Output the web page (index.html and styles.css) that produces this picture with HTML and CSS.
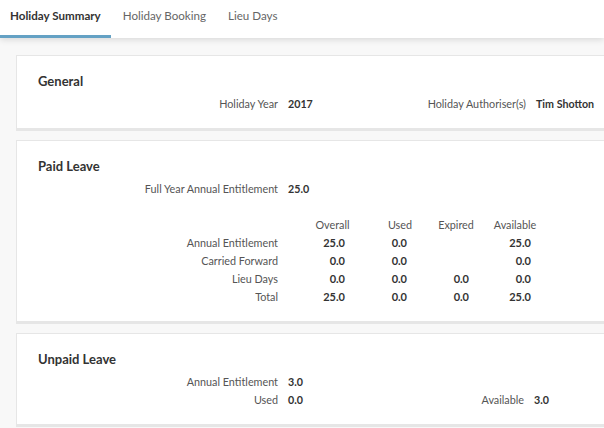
FILE: index.html
```html
<!DOCTYPE html>
<html lang="en">
<head>
<meta charset="utf-8">
<title>Holiday Summary</title>
<link rel="stylesheet" href="styles.css">
</head>
<body>
<nav class="tabs">
  <a class="tab tab--active">Holiday Summary</a>
  <a class="tab">Holiday Booking</a>
  <a class="tab">Lieu Days</a>
</nav>
<main class="content">
  <section class="card">
    <h2 class="card__title">General</h2>
    <div class="kv">
      <span class="kv__label">Holiday Year</span>
      <span class="kv__value">2017</span>
      <span class="kv__label">Holiday Authoriser(s)</span>
      <span class="kv__value">Tim Shotton</span>
    </div>
  </section>

  <section class="card">
    <h2 class="card__title">Paid Leave</h2>
    <div class="kv">
      <span class="kv__label">Full Year Annual Entitlement</span>
      <span class="kv__value">25.0</span>
    </div>
    <div class="table">
      <span class="table__label"></span>
      <span class="table__head">Overall</span>
      <span class="table__head">Used</span>
      <span class="table__head">Expired</span>
      <span class="table__head">Available</span>

      <span class="table__label">Annual Entitlement</span>
      <span class="table__val table__val--overall">25.0</span>
      <span class="table__val table__val--used">0.0</span>
      <span class="table__val table__val--expired"></span>
      <span class="table__val table__val--avail">25.0</span>

      <span class="table__label">Carried Forward</span>
      <span class="table__val table__val--overall">0.0</span>
      <span class="table__val table__val--used">0.0</span>
      <span class="table__val table__val--expired"></span>
      <span class="table__val table__val--avail">0.0</span>

      <span class="table__label">Lieu Days</span>
      <span class="table__val table__val--overall">0.0</span>
      <span class="table__val table__val--used">0.0</span>
      <span class="table__val table__val--expired">0.0</span>
      <span class="table__val table__val--avail">0.0</span>

      <span class="table__label">Total</span>
      <span class="table__val table__val--overall">25.0</span>
      <span class="table__val table__val--used">0.0</span>
      <span class="table__val table__val--expired">0.0</span>
      <span class="table__val table__val--avail">25.0</span>
    </div>
  </section>

  <section class="card">
    <h2 class="card__title">Unpaid Leave</h2>
    <div class="kv kv--unpaid">
      <span class="kv__label">Annual Entitlement</span>
      <span class="kv__value">3.0</span>
      <span></span>
      <span></span>
      <span class="kv__label">Used</span>
      <span class="kv__value">0.0</span>
      <span class="kv__label">Available</span>
      <span class="kv__value">3.0</span>
    </div>
  </section>
</main>
</body>
</html>
```

FILE: styles.css
```css
html, body {
  margin: 0;
  padding: 0;
  overflow: hidden;
}

body {
  background: #f8f8f8;
  font-family: Lato, "Open Sans", Arial, sans-serif;
  color: #333;
  width: 604px;
  height: 428px;
}

.tabs {
  display: flex;
  gap: 2px;
  height: 38px;
  background: #fff;
  box-shadow: 0 2px 6px rgba(0, 0, 0, 0.12);
  position: relative;
  z-index: 1;
}

.tab {
  display: flex;
  align-items: center;
  padding: 0 10px 8px;
  font-size: 11.6px;
  color: #666;
  box-sizing: border-box;
  height: 38px;
}

.tab--active {
  color: #333;
  font-weight: 700;
  border-bottom: 3px solid #64a1c4;
  padding-bottom: 5px;
}

.content {
  padding: 17px 0 0 16px;
  display: flex;
  flex-direction: column;
  gap: 9px;
}

.card {
  background: #fff;
  border: 1px solid #e6e6e6;
  border-right: 0;
  border-bottom: 3px solid #e6e6e6;
  padding: 17px 0 15px 21px;
  box-sizing: border-box;
}

.card__title {
  margin: 0 0 6px;
  font-size: 13px;
  line-height: 16px;
  font-weight: 700;
  color: #333;
}

.kv {
  display: grid;
  grid-template-columns: 240px 100px 128px auto;
  column-gap: 10px;
  font-size: 11px;
  line-height: 18px;
}

.kv--unpaid {
  grid-template-columns: 240px 100px 126px auto;
}

.kv__label {
  text-align: right;
  color: #555;
  font-size: 10.8px;
}

.kv__value {
  font-weight: 700;
  color: #333;
  font-size: 10.7px;
}

.table {
  display: grid;
  grid-template-columns: 262px 65px 70px 42px 76px;
  margin-top: 18px;
  font-size: 11px;
  line-height: 18px;
}

.table__label {
  text-align: right;
  padding-right: 22px;
  color: #555;
  font-size: 10.8px;
}

.table__head {
  text-align: center;
  color: #555;
  font-size: 10.8px;
}

.table__val {
  text-align: right;
  font-weight: 700;
  color: #333;
}

.table__val--overall { padding-right: 20px; }
.table__val--used { padding-right: 28px; }
.table__val--expired { padding-right: 8px; }
.table__val--avail { padding-right: 22px; }
```
